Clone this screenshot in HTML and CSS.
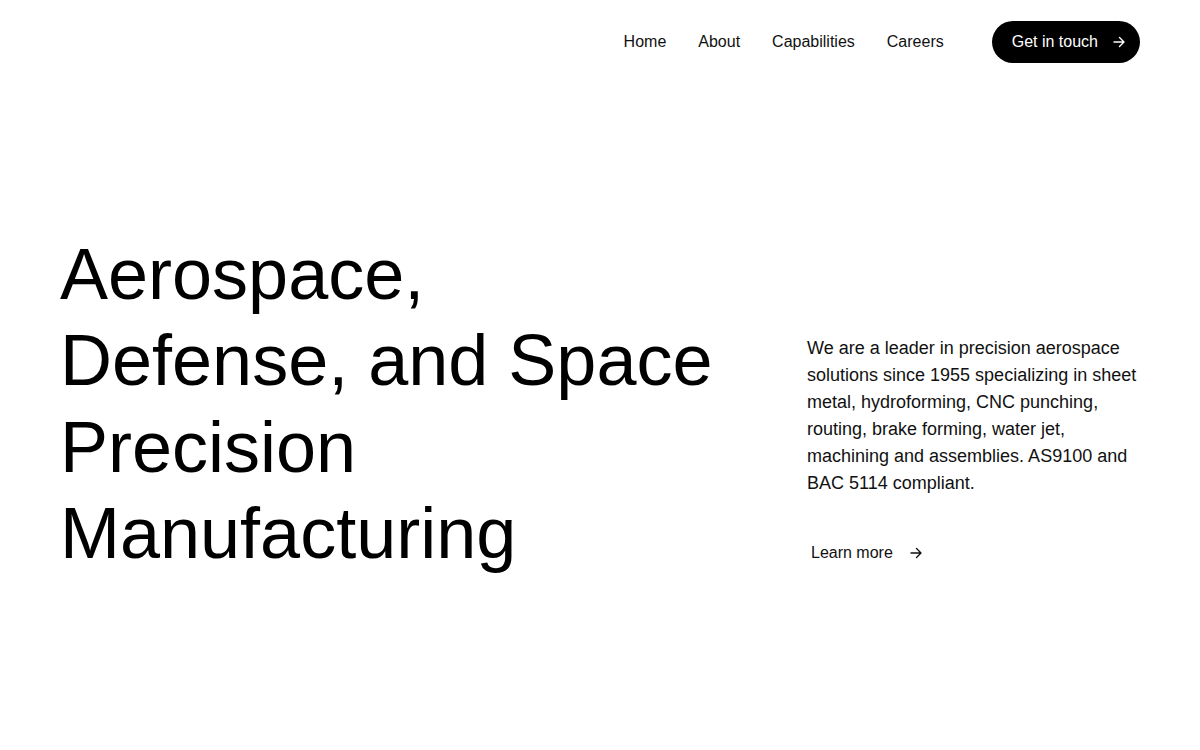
FILE: index.html
```html
<!DOCTYPE html>
<html lang="en">
<head>
<meta charset="utf-8">
<title>Precision Manufacturing</title>
<link rel="stylesheet" href="styles.css">
</head>
<body>
<header class="site-header">
  <nav class="nav">
    <a class="nav-link" href="#">Home</a>
    <a class="nav-link" href="#">About</a>
    <a class="nav-link" href="#">Capabilities</a>
    <a class="nav-link" href="#">Careers</a>
  </nav>
  <a class="cta" href="#">Get in touch
    <svg class="arrow" viewBox="0 0 12 12" width="12" height="12" aria-hidden="true"><path d="M1 6h10M6.5 1.5 11 6l-4.5 4.5" fill="none" stroke="currentColor" stroke-width="1.4" stroke-linecap="round" stroke-linejoin="round"/></svg>
  </a>
</header>
<main class="hero">
  <h1 class="hero-title">Aerospace, Defense, and Space Precision Manufacturing</h1>
  <div class="hero-side">
    <p class="hero-text">We are a leader in precision aerospace solutions since 1955 specializing in sheet metal, hydroforming, CNC punching, routing, brake forming, water jet, machining and assemblies. AS9100 and BAC 5114 compliant.</p>
    <a class="learn" href="#">Learn more
      <svg class="arrow" viewBox="0 0 12 12" width="12" height="12" aria-hidden="true"><path d="M1 6h10M6.5 1.5 11 6l-4.5 4.5" fill="none" stroke="currentColor" stroke-width="1.4" stroke-linecap="round" stroke-linejoin="round"/></svg>
    </a>
  </div>
</main>
</body>
</html>
```
FILE: styles.css
```css
* { box-sizing: border-box; }
html, body { margin: 0; padding: 0; background: #fff; }
body {
  font-family: "Liberation Sans", Arial, sans-serif;
  color: #000;
}
a { color: inherit; text-decoration: none; }

.site-header {
  display: flex;
  justify-content: flex-end;
  align-items: center;
  padding: 21px 60px;
}
.nav {
  display: flex;
  gap: 32px;
  margin-right: 48px;
}
.nav-link {
  font-size: 16px;
  line-height: 24px;
  color: #111;
}
.cta {
  display: inline-flex;
  align-items: center;
  gap: 15px;
  height: 42px;
  padding: 0 15px 0 20px;
  border-radius: 21px;
  background: #000;
  color: #fff;
  font-size: 16px;
}

.hero {
  display: flex;
  justify-content: space-between;
  align-items: flex-start;
  padding: 147px 60px 0;
}
.hero-title {
  width: 660px;
  margin: 0;
  font-size: 72px;
  line-height: 86.4px;
  font-weight: 400;
  letter-spacing: 0;
}
.hero-side {
  width: 333px;
  padding-top: 104px;
}
.hero-text {
  margin: 0;
  font-size: 18px;
  line-height: 27px;
  color: #111;
}
.learn {
  display: inline-flex;
  align-items: center;
  gap: 17px;
  margin-top: 44px;
  padding: 0 4px;
  font-size: 16px;
  line-height: 24px;
  color: #111;
}
```
